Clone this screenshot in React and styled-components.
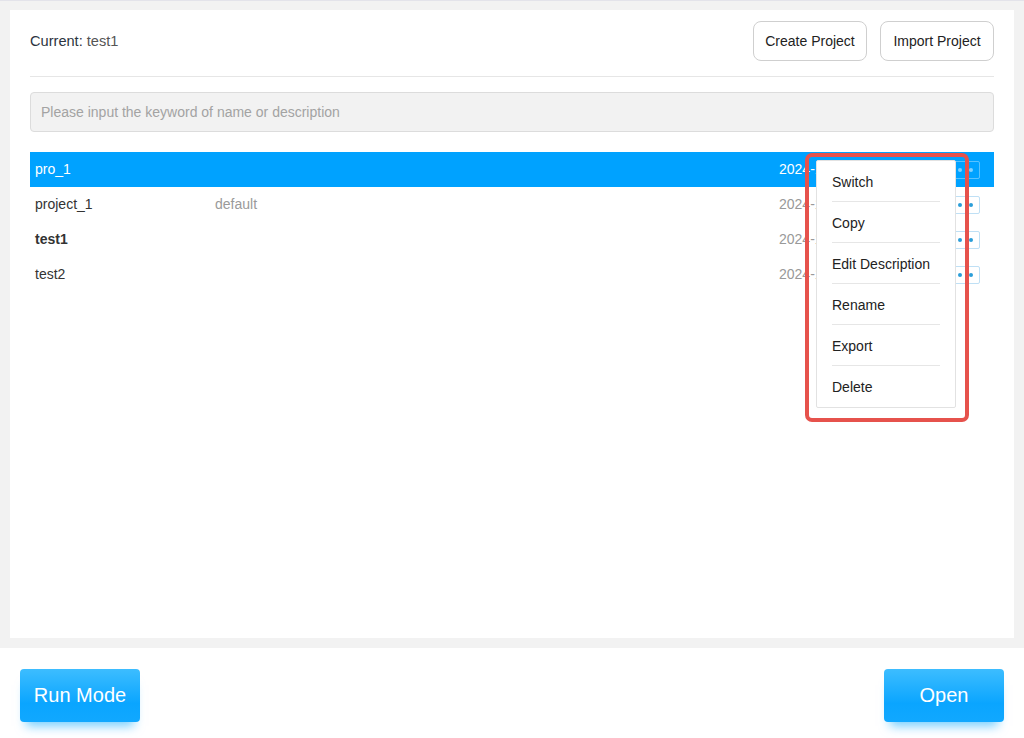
import styled, { createGlobalStyle } from "styled-components";

const Global = createGlobalStyle`
  body {
    margin: 0;
    background: #f2f2f2;
    font-family: "Liberation Sans", Arial, sans-serif;
  }
`;

const Page = styled.div`
  width: 1024px;
  height: 738px;
  display: flex;
  flex-direction: column;
  border-top: 1px solid #e3e3ea;
  box-sizing: border-box;
  overflow: hidden;
`;

const Panel = styled.div`
  position: relative;
  margin: 9px 10px 10px;
  height: 628px;
  background: #fff;
  padding: 0 20px;
  box-sizing: border-box;
`;

const Header = styled.div`
  display: flex;
  align-items: center;
  justify-content: space-between;
  padding: 11px 0 15px;
  border-bottom: 1px solid #e6e6e6;
`;

const Current = styled.div`
  font-size: 14.6px;
  color: #2c3440;
  span {
    color: #555;
  }
`;

const Actions = styled.div`
  display: flex;
  gap: 13px;
`;

const OutlineButton = styled.button`
  width: 114px;
  height: 40px;
  padding: 0;
  background: #fff;
  border: 1px solid #cfcfcf;
  border-radius: 8px;
  font-family: inherit;
  font-size: 14px;
  color: #222;
`;

const Search = styled.input`
  display: block;
  width: 100%;
  height: 40px;
  margin-top: 15px;
  box-sizing: border-box;
  border: 1px solid #dcdcdc;
  border-radius: 4px;
  background: #f2f2f2;
  padding: 0 10px;
  font-family: inherit;
  font-size: 14px;
  outline: none;
  &::placeholder {
    color: #a3a3a3;
  }
`;

const List = styled.div`
  margin-top: 20px;
`;

const Row = styled.div`
  display: flex;
  align-items: center;
  height: 35px;
  padding: 0 14px 0 5px;
  font-size: 14px;
  line-height: 33px;
  background: ${(p) => (p.$active ? "#00a2ff" : "transparent")};
  color: ${(p) => (p.$active ? "#fff" : "#333")};
`;

const Name = styled.div`
  width: 180px;
  font-weight: ${(p) => (p.$bold ? 700 : 400)};
`;

const Desc = styled.div`
  flex: 1;
  color: #9a9a9a;
`;

const DateCell = styled.div`
  width: 161px;
  color: ${(p) => (p.$active ? "#fff" : "#999")};
`;

const DotsButton = styled.div`
  width: 40px;
  height: 18px;
  box-sizing: border-box;
  border: 1px solid ${(p) => (p.$active ? "rgba(255,255,255,0.35)" : "#bfe0f5")};
  border-radius: 2px;
  background: ${(p) => (p.$active ? "transparent" : "#fff")};
  display: flex;
  align-items: center;
  justify-content: center;
  gap: 7px;
  i {
    width: 4px;
    height: 4px;
    border-radius: 50%;
    background: ${(p) => (p.$active ? "#7fd0ff" : "#2b9ed8")};
  }
`;

const Menu = styled.div`
  position: absolute;
  left: 806px;
  top: 150px;
  width: 140px;
  background: #fff;
  border: 1px solid #e2e2e2;
  border-radius: 2px;
  box-sizing: border-box;
  padding: 0 15px;
`;

const MenuItem = styled.div`
  height: 40px;
  box-sizing: content-box;
  padding-top: 0;
  line-height: 42px;
  overflow: visible;
  font-size: 14px;
  color: #222;
  border-bottom: 1px solid ${(p) => (p.$last ? "transparent" : "#e6e6e6")};
`;

const Highlight = styled.div`
  position: absolute;
  left: 795px;
  top: 143px;
  width: 164px;
  height: 269px;
  border: 4px solid #e6524c;
  border-radius: 7px;
  box-sizing: border-box;
`;

const Footer = styled.div`
  flex: 1;
  background: #fff;
  display: flex;
  justify-content: space-between;
  align-items: flex-start;
  padding: 21px 20px 0;
`;

const PrimaryButton = styled.button`
  width: 120px;
  height: 53px;
  border: none;
  border-radius: 4px;
  background: linear-gradient(180deg, #3dbdff 0%, #0aa5ff 65%, #11a8ff 100%);
  color: #fff;
  font-family: inherit;
  font-size: 20px;
  box-shadow: 0 10px 10px -6px rgba(0, 165, 255, 0.55);
`;

const projects = [
  { name: "pro_1", desc: "", date: "2024-11-28 16:32:05", active: true },
  { name: "project_1", desc: "default", date: "2024-11-20 10:12:44" },
  { name: "test1", desc: "", date: "2024-11-18 09:41:30", bold: true },
  { name: "test2", desc: "", date: "2024-11-15 14:05:12" },
];

const menuItems = ["Switch", "Copy", "Edit Description", "Rename", "Export", "Delete"];

export default function App() {
  return (
    <>
      <Global />
      <Page>
        <Panel>
          <Header>
            <Current>
              Current: <span>test1</span>
            </Current>
            <Actions>
              <OutlineButton>Create Project</OutlineButton>
              <OutlineButton>Import Project</OutlineButton>
            </Actions>
          </Header>
          <Search placeholder="Please input the keyword of name or description" />
          <List>
            {projects.map((p) => (
              <Row key={p.name} $active={p.active}>
                <Name $bold={p.bold}>{p.name}</Name>
                <Desc>{p.desc}</Desc>
                <DateCell $active={p.active}>{p.date}</DateCell>
                <DotsButton $active={p.active}>
                  <i />
                  <i />
                  <i />
                </DotsButton>
              </Row>
            ))}
          </List>
          <Menu>
            {menuItems.map((m, i) => (
              <MenuItem key={m} $last={i === menuItems.length - 1}>
                {m}
              </MenuItem>
            ))}
          </Menu>
          <Highlight />
        </Panel>
        <Footer>
          <PrimaryButton>Run Mode</PrimaryButton>
          <PrimaryButton>Open</PrimaryButton>
        </Footer>
      </Page>
    </>
  );
}
